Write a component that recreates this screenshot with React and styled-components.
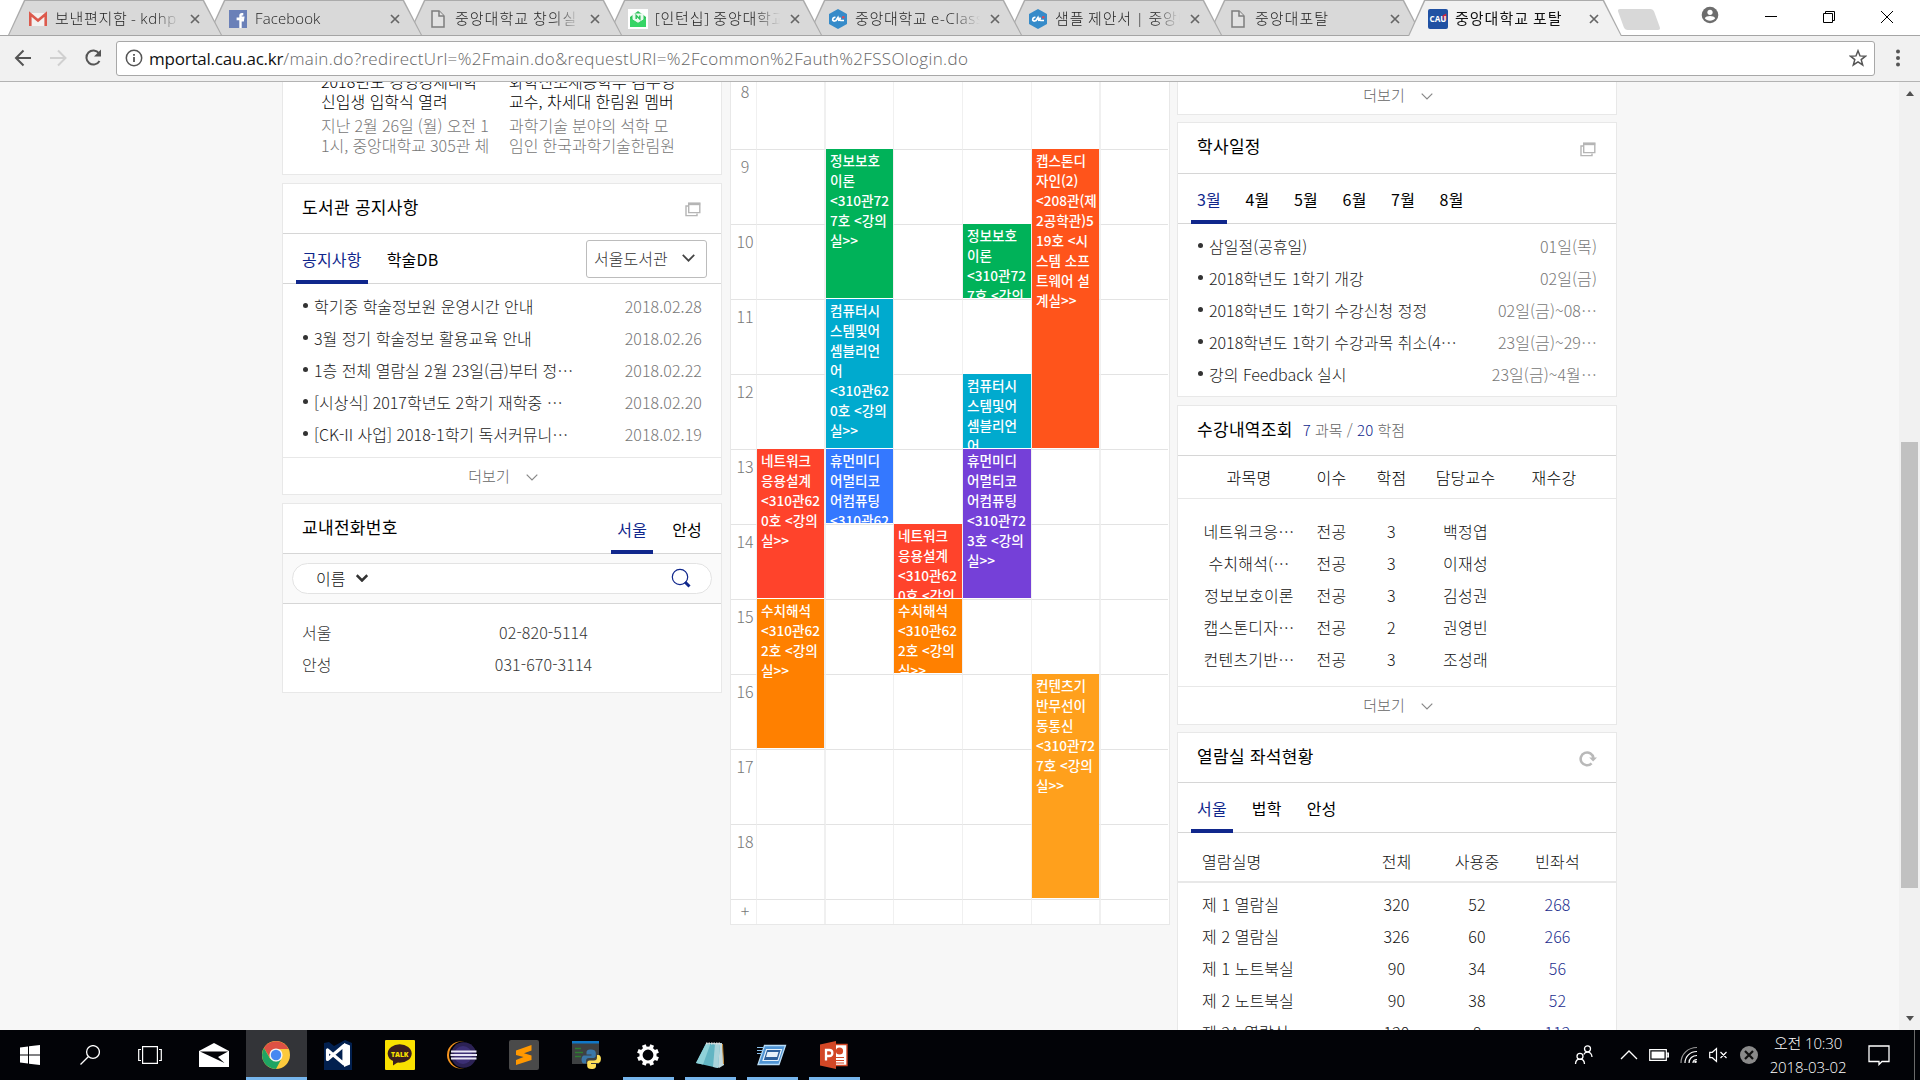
import React from "react";
import styled, { createGlobalStyle, css } from "styled-components";

const Global = createGlobalStyle`
  *, *::before, *::after { box-sizing: border-box; }
  html, body { margin: 0; padding: 0; overflow: hidden; }
  body { font-family: "Noto Sans CJK KR", "Noto Sans", sans-serif; font-weight: 300; color: #333; }
`;

const NAVY = "#10278c";
const UI_FONT = `"Open Sans", "Noto Sans CJK KR", sans-serif`;

const Screen = styled.div`
  width: 1920px;
  height: 1080px;
  display: flex;
  flex-direction: column;
  overflow: hidden;
  background: #f7f7f7;
`;

/* ---------- browser chrome ---------- */
const TabStrip = styled.div`
  height: 36px;
  flex: none;
  display: flex;
  padding-left: 8px;
  background: #fff;
  box-shadow: inset 0 -1px 0 #a5a5a5;
`;
const TabShape = styled.div`
  position: relative;
  z-index: ${(p) => p.$z};
  width: 214px;
  height: ${(p) => (p.$active ? 36 : 35)}px;
  margin-right: -14px;
  flex: none;
  display: flex;
  align-items: center;
  padding: 2px 0 0 20px;
  background: #ababab;
  clip-path: polygon(16px 0, calc(100% - 18px) 0, 100% 100%, 0 100%);
  &::before {
    content: "";
    position: absolute;
    z-index: -1;
    inset: 1px 1.2px 0 1.2px;
    background: ${(p) => (p.$active ? "#f1f1f1" : "#d9d9d9")};
    clip-path: polygon(16px 0, calc(100% - 18px) 0, 100% 100%, 0 100%);
  }
`;
const TabLabel = styled.span`
  width: 125px;
  margin: -2px 0 0 7px;
  overflow: hidden;
  white-space: nowrap;
  font: ${(p) => (p.$active ? 400 : 300)} 15px/24px ${UI_FONT};
  letter-spacing: ${(p) => p.$spacing || "1px"};
  word-spacing: -1px;
  color: ${(p) => (p.$active ? "#111" : "#222")};
  mask-image: linear-gradient(to right, #000 ${(p) => (p.$active ? 99 : 80)}%, transparent 100%);
`;
const TabClose = styled.svg`
  margin-left: ${(p) => (p.$active ? 9 : 10)}px;
  stroke: #666;
  stroke-width: 1.7;
`;
const NewTab = styled.div`
  flex: none;
  width: 36px;
  height: 21px;
  margin: 9px 0 0 13px;
  border-radius: 3px;
  background: #d8d8d8;
  transform: skewX(20deg);
`;
const WindowButtons = styled.div`
  flex: none;
  display: flex;
  margin-left: 44px;
  svg { margin-right: 38px; margin-top: 6px; }
  svg:first-child { margin-right: 42px; }
  svg:last-child { margin-right: 0; }
`;
const Toolbar = styled.div`
  height: 46px;
  flex: none;
  display: flex;
  align-items: center;
  padding: 0 15px 1px 14px;
  background: #f1f1f1;
  border-bottom: 1px solid #b3b3b3;
`;
const NavIcons = styled.div`
  width: 102px;
  display: flex;
  gap: 15px;
`;
const Omnibox = styled.div`
  width: 1759px;
  height: 35px;
  display: flex;
  align-items: center;
  padding: 0 7px 0 8px;
  border: 1px solid #a8a8a8;
  border-radius: 3px;
  background: #fff;
`;
const Url = styled.span`
  flex: 1;
  margin-left: 6px;
  padding-top: 1px;
  white-space: nowrap;
  font: 300 17px/24px ${UI_FONT};
  letter-spacing: 0.35px;
  color: #666;
  b { font-weight: 400; letter-spacing: -0.22px; color: #111; }
`;
const MenuDots = styled.svg`
  margin-left: 16px;
`;

/* ---------- page ---------- */
const Viewport = styled.div`
  height: 948px;
  flex: none;
  display: flex;
  overflow: hidden;
`;
const Columns = styled.div`
  width: 1899px;
  padding-left: 282px;
  display: grid;
  grid-template-columns: 440px 440px 440px;
  column-gap: 7.5px;
  align-items: start;
`;
const Column = styled.div`
  display: flex;
  flex-direction: column;
  gap: 8px;
`;
const Card = styled.section`
  height: ${(p) => (p.$h ? `${p.$h}px` : "auto")};
  margin-top: ${(p) => p.$shift || 0}px;
  border: 1px solid #e8e8e8;
  background: #fff;
  overflow: hidden;
`;
const CardHead = styled.header`
  height: ${(p) => p.$h || 50}px;
  display: flex;
  align-items: center;
  justify-content: space-between;
  padding: 0 ${(p) => p.$right ?? 20}px 0 19px;
  border-bottom: 1px solid #d6d6d6;
  > svg { margin-top: 2px; }
`;
const Title = styled.h2`
  margin: 0;
  padding-bottom: ${(p) => p.$lift ?? 4}px;
  font-size: 17px;
  line-height: 24px;
  font-weight: 400;
  letter-spacing: 0.3px;
  color: #000;
`;
const TitleNote = styled.small`
  margin-left: 10px;
  font-size: 15px;
  font-weight: 300;
  letter-spacing: 0.15px;
  word-spacing: -0.3px;
  color: #666;
  em { font-style: normal; color: ${NAVY}; }
`;
const Tabs = styled.nav`
  height: 50px;
  display: flex;
  gap: ${(p) => p.$gap || 13}px;
  padding-left: 13px;
  border-bottom: 1px solid #d6d6d6;
  ${(p) => p.$inHead && css`
    border: 0;
    height: 50px;
    margin: 1px -7px 0 0;
  `}
`;
const Tab = styled.a`
  height: 50px;
  padding: 2px 6px 0;
  line-height: 46px;
  font-size: 16px;
  font-weight: 400;
  letter-spacing: 0.2px;
  white-space: nowrap;
  color: ${(p) => (p.$on ? NAVY : "#000")};
  box-shadow: ${(p) => (p.$on ? `inset 0 -4px 0 ${NAVY}` : "none")};
`;
const Select = styled.div`
  width: 121px;
  height: 38px;
  margin: 6px 14px 0 auto;
  display: flex;
  align-items: center;
  justify-content: space-between;
  padding: 0 11px 2px 7px;
  border: 1px solid #bcbcbc;
  border-radius: 3px;
  font-size: 16px;
  color: #333;
`;
const List = styled.ul`
  margin: 0;
  padding: 6px 19px 0;
  height: ${(p) => p.$h}px;
  list-style: none;
`;
const Item = styled.li`
  height: 32px;
  display: flex;
  align-items: center;
  justify-content: space-between;
  font-size: 16px;
  white-space: nowrap;
  color: #222;
  time { color: #777; letter-spacing: 0.08px; }
  &::before {
    content: "";
    width: 5px;
    height: 5px;
    margin: -2px 6px 0 1px;
    border-radius: 50%;
    background: #333;
  }
  span { flex: 1; }
`;
const MoreBar = styled.div`
  height: 38px;
  display: flex;
  align-items: center;
  justify-content: center;
  gap: 16px;
  padding: 0 0 2px 2px;
  border-top: 1px solid #e8e8e8;
  font-size: 15px;
  color: #666;
  svg { margin-top: 3px; }
`;
const News = styled.div`
  display: grid;
  grid-template-columns: 188px 188px;
  margin-top: -2px;
  padding: 0 0 0 38px;
  font-size: 16px;
  line-height: 20px;
  white-space: nowrap;
  h3 { margin: 0 0 4px; font-size: 16px; font-weight: 300; line-height: 20px; color: #000; }
  p { margin: 0; color: #777; word-spacing: -0.4px; }
`;
const SearchBand = styled.div`
  height: 50px;
  padding: 9px 9px 0;
  background: #fafafa;
  border-bottom: 1px solid #d6d6d6;
`;
const SearchPill = styled.div`
  height: 31px;
  display: flex;
  align-items: center;
  padding: 0 20px 1px 23px;
  border: 1px solid #e3e3e3;
  border-radius: 16px;
  background: #fff;
  font-size: 16px;
  color: #111;
  svg:first-of-type { margin-left: 11px; }
  svg:last-of-type { margin-left: auto; }
`;
const PhoneRow = styled.div`
  height: 32px;
  display: grid;
  grid-template-columns: 120px 243px;
  align-items: center;
  padding-left: 19px;
  font-size: 16px;
  letter-spacing: 0.1px;
  color: #333;
  span:last-child { text-align: center; }
`;
const PhoneList = styled.div`
  padding-top: 12px;
`;

const CourseRow = styled.div`
  height: ${(p) => (p.$head ? 43 : 32)}px;
  display: grid;
  grid-template-columns: 102px 63px 57px 91px 86px;
  align-items: center;
  padding-left: 20px;
  text-align: center;
  font-size: 16px;
  letter-spacing: 0.2px;
  white-space: nowrap;
  color: #111;
  ${(p) => p.$head && css`
    border-bottom: 1px solid #e8e8e8;
    color: #000;
  `}
`;
const CourseBody = styled.div`
  height: 187px;
  padding-top: 16px;
`;
const SeatRow = styled.div`
  height: ${(p) => (p.$head ? 50 : 32)}px;
  display: grid;
  grid-template-columns: 154px 81px 80px 81px;
  align-items: center;
  padding-left: 24px;
  padding-top: ${(p) => (p.$head ? 8 : 0)}px;
  margin-bottom: ${(p) => (p.$head ? 5 : 0)}px;
  border-bottom: ${(p) => (p.$head ? "2px solid #e8e8e8" : "0")};
  text-align: center;
  font-size: 16px;
  letter-spacing: 0.1px;
  white-space: nowrap;
  color: #111;
  span:first-child { text-align: left; }
  span:last-child { color: ${(p) => (p.$head ? "#111" : "#1d2f8e")}; }
`;

/* ---------- timetable ---------- */
const TimeGrid = styled.div`
  display: grid;
  grid-template-columns: 26px 69px 68px 69px 69px 69px 67px;
  grid-template-rows: repeat(11, 75px) 25px;
`;
const Cell = styled.div`
  grid-column: ${(p) => p.$col};
  grid-row: ${(p) => p.$row};
  border-top: 1px solid #e3e3e3;
  border-right: ${(p) => (p.$col === 7 ? "0" : p.$col === 2 || p.$col === 6 ? "2px" : "1px")} solid #f0f0f0;
`;
const Hour = styled(Cell)`
  padding: ${(p) => (p.$small ? 0 : 4)}px 0 0 4px;
  font-size: 16px;
  line-height: ${(p) => (p.$small ? 20 : 24)}px;
  text-align: center;
  color: #777;
`;
const Lecture = styled.div`
  grid-column: ${(p) => p.$col};
  grid-row: ${(p) => p.$row} / span ${(p) => p.$span};
  z-index: 1;
  margin: 0 ${(p) => (p.$col === 2 || p.$col === 6 ? 2 : 1)}px 1px 0;
  padding: 1px 0 0 4.5px;
  overflow: hidden;
  background: ${(p) => p.$bg};
  color: #fff;
  font-size: 13.6px;
  font-weight: 500;
  line-height: 20px;
  white-space: pre;
`;

/* ---------- scrollbar ---------- */
const ScrollTrack = styled.div`
  width: 21px;
  display: flex;
  flex-direction: column;
  align-items: center;
  justify-content: space-between;
  padding: 9px 2px 8px;
  background: #f1f1f1;
`;
const Thumb = styled.div`
  width: 17px;
  height: 446px;
  margin-top: 216px;
  background: #c1c1c1;
`;

/* ---------- taskbar ---------- */
const Taskbar = styled.footer`
  height: 50px;
  flex: none;
  display: flex;
  background: #020307;
`;
const TaskButton = styled.div`
  width: ${(p) => p.$w || 62}px;
  height: 50px;
  display: flex;
  align-items: center;
  justify-content: center;
  padding-left: ${(p) => p.$inset || 0}px;
  background: ${(p) => (p.$active ? "linear-gradient(#333438,#333438) 1px 0/61px 100% no-repeat" : "none")};
  position: relative;
  &::after {
    content: "";
    position: absolute;
    bottom: 0;
    left: ${(p) => (p.$active ? 1 : 6)}px;
    width: ${(p) => (p.$active ? 61 : 51)}px;
    height: ${(p) => (p.$active || p.$open ? 3 : 0)}px;
    background: #76b5ec;
  }
`;
const Tray = styled.div`
  margin-left: auto;
  display: flex;
  align-items: center;
  gap: 11px;
  padding-right: 5px;
  svg { flex: none; }
  svg:first-child { margin-right: 15px; }
`;
const Clock = styled.div`
  width: 100px;
  margin: 0 -1px 0 -11px;
  text-align: center;
  color: #fff;
  font: 300 15px/24px ${UI_FONT};
  letter-spacing: -0.15px;
`;
const Peek = styled.div`
  width: 1px;
  height: 50px;
  margin-left: 13px;
  background: #6a6a6a;
`;

/* ---------- icons ---------- */
const Chevron = ({ w = 12, h = 7, c = "#888", s = 1.2 }) => (
  <svg width={w} height={h} viewBox="0 0 12 7" fill="none" stroke={c} strokeWidth={s}>
    <path d="M.7.7 6 6 11.3.7" />
  </svg>
);
const WindowIcon = () => (
  <svg width="16" height="15" viewBox="0 0 16 15" fill="none" stroke="#b5b5b5">
    <path d="M3.700 1.200h11.100v9.400H3.700z" strokeWidth="1.400" />
    <path d="M3.200 2h12" strokeWidth="2.400" />
    <path d="M3 4H1v9.600h11v-2" strokeWidth="1.400" />
  </svg>
);
const RefreshIcon = () => (
  <svg width="18" height="17" viewBox="0 0 18 17" fill="none">
    <path d="M12.600 13.400A6.400 6.400 0 1 1 14.400 8" stroke="#b9b9b9" strokeWidth="2.600" />
    <path d="M10.200 7.400H18l-3.900 4.200z" fill="#b9b9b9" />
  </svg>
);
const PageFav = () => (
  <svg width="20" height="20" viewBox="0 0 20 20" fill="#e2e2e2" stroke="#7d7d7d" strokeWidth="1.500">
    <path d="M4 2h7l5 5v11H4z" /><path d="M11 2v5h5" />
  </svg>
);
const GmailFav = () => (
  <svg width="20" height="20" viewBox="0 0 20 20">
    <path d="M2 4h16v13H2z" fill="#f3f1f0" />
    <path d="M2.300 17V5l7.700 6.600L17.700 5v12" fill="none" stroke="#dc5a4d" strokeWidth="2.600" />
  </svg>
);
const FbFav = () => (
  <svg width="20" height="20" viewBox="0 0 20 20">
    <rect x="1" y="1" width="18" height="18" fill="#6a80b8" />
    <path d="M15.300 5.200h-1.400c-1 0-1.400.5-1.400 1.400v2h2.700l-.4 2.700h-2.300V19" fill="none" stroke="#fff" strokeWidth="2.400" />
    <path d="M8.600 8.600h5v2.600h-5z" fill="#fff" />
  </svg>
);
const MailFav = () => (
  <svg width="20" height="20" viewBox="0 0 20 20">
    <rect width="20" height="20" fill="#fff" />
    <path d="M2 8l8-6 8 6v10H2z" fill="#2fc25b" />
    <path d="M4.500 4.500h11v6L10 14l-5.500-3.500z" fill="#eafbef" />
    <path d="M2 9l8 5 8-5v9H2z" fill="#36d566" />
    <path d="M8.200 10V6.500l3.600 3.500V6.500" fill="none" stroke="#2fc25b" strokeWidth="1.500" />
  </svg>
);
const HexFav = () => (
  <svg width="20" height="20" viewBox="0 0 20 20">
    <path d="M10 0l9 5v10l-9 5-9-5V5z" fill="#368bc9" />
    <path d="M7.500 8.500c-3-.8-4 4-1 3.500l1.500-.5 2-3 1 3.500M11.500 12l.8-3.500M12.500 11.500h3.500" fill="none" stroke="#fff" strokeWidth="1.700" />
    <circle cx="15.300" cy="8.300" r="1.300" fill="#d64b58" />
  </svg>
);
const CauFav = () => (
  <svg width="20" height="20" viewBox="0 0 20 20">
    <rect width="20" height="20" rx="2" fill="#2051a3" />
    <path d="M14.500 6.500l3.800-2v6l-2 1z" fill="#d0283b" />
    <text x="1.500" y="13.300" fontSize="8" fontWeight="700" fontFamily="Open Sans, sans-serif" fill="#fff" textLength="17" lengthAdjust="spacingAndGlyphs">CAU</text>
  </svg>
);

const browserTabs = [
  { label: "보낸편지함 - kdhp", Icon: GmailFav, spacing: "0.7px" },
  { label: "Facebook", Icon: FbFav, spacing: "0.1px" },
  { label: "중앙대학교 창의실", Icon: PageFav },
  { label: "[인턴십] 중앙대학교", Icon: MailFav, spacing: "0.75px" },
  { label: "중앙대학교 e-Class", Icon: HexFav, spacing: "0.7px" },
  { label: "샘플 제안서 | 중앙대", Icon: HexFav, spacing: "0.85px" },
  { label: "중앙대포탈", Icon: PageFav },
  { label: "중앙대학교 포탈", Icon: CauFav, active: true },
];

const notices = [
  ["학기중 학술정보원 운영시간 안내", "2018.02.28"],
  ["3월 정기 학술정보 활용교육 안내", "2018.02.26"],
  ["1층 전체 열람실 2월 23일(금)부터 정…", "2018.02.22"],
  ["[시상식] 2017학년도 2학기 재학중 …", "2018.02.20"],
  ["[CK-II 사업] 2018-1학기 독서커뮤니…", "2018.02.19"],
];
const schedule = [
  ["삼일절(공휴일)", "01일(목)"],
  ["2018학년도 1학기 개강", "02일(금)"],
  ["2018학년도 1학기 수강신청 정정", "02일(금)~08…"],
  ["2018학년도 1학기 수강과목 취소(4…", "23일(금)~29…"],
  ["강의 Feedback 실시", "23일(금)~4월…"],
];
const courses = [
  ["네트워크응…", "전공", "3", "백정엽", ""],
  ["수치해석(…", "전공", "3", "이재성", ""],
  ["정보보호이론", "전공", "3", "김성권", ""],
  ["캡스톤디자…", "전공", "2", "권영빈", ""],
  ["컨텐츠기반…", "전공", "3", "조성래", ""],
];
const seats = [
  ["제 1 열람실", 320, 52, 268],
  ["제 2 열람실", 326, 60, 266],
  ["제 1 노트북실", 90, 34, 56],
  ["제 2 노트북실", 90, 38, 52],
  ["제 2A 열람실", 120, 8, 112],
];
const hours = [8, 9, 10, 11, 12, 13, 14, 15, 16, 17, 18];
const lectures = [
  { col: 3, at: 9, span: 2, bg: "#00b259", text: "정보보호\n이론\n<310관72\n7호 <강의\n실>>" },
  { col: 5, at: 10, span: 1, bg: "#00b259", text: "정보보호\n이론\n<310관72\n7호 <강의" },
  { col: 6, at: 9, span: 4, bg: "#ff541b", text: "캡스톤디\n자인(2)\n<208관(제\n2공학관)5\n19호 <시\n스템 소프\n트웨어 설\n계실>>" },
  { col: 3, at: 11, span: 2, bg: "#00aace", text: "컴퓨터시\n스템및어\n셈블리언\n어\n<310관62\n0호 <강의\n실>>" },
  { col: 5, at: 12, span: 1, bg: "#00aace", text: "컴퓨터시\n스템및어\n셈블리언\n어" },
  { col: 2, at: 13, span: 2, bg: "#ff432b", text: "네트워크\n응용설계\n<310관62\n0호 <강의\n실>>" },
  { col: 3, at: 13, span: 1, bg: "#3478ff", text: "휴먼미디\n어멀티코\n어컴퓨팅\n<310관62" },
  { col: 5, at: 13, span: 2, bg: "#7540d8", text: "휴먼미디\n어멀티코\n어컴퓨팅\n<310관72\n3호 <강의\n실>>" },
  { col: 4, at: 14, span: 1, bg: "#ff432b", text: "네트워크\n응용설계\n<310관62\n0호 <강의" },
  { col: 2, at: 15, span: 2, bg: "#ff8000", text: "수치해석\n<310관62\n2호 <강의\n실>>" },
  { col: 4, at: 15, span: 1, bg: "#ff8000", text: "수치해석\n<310관62\n2호 <강의\n실>>" },
  { col: 6, at: 16, span: 3, bg: "#ffa01c", text: "컨텐츠기\n반무선이\n동통신\n<310관72\n7호 <강의\n실>>" },
];

function Browser() {
  return (
    <>
      <TabStrip>
        {browserTabs.map(({ label, Icon, active, spacing }, i) => (
          <TabShape key={label} $active={active} $z={active ? 20 : 10 - i}>
            <Icon />
            <TabLabel $active={active} $spacing={spacing}>{label}</TabLabel>
            <TabClose $active={active} width="10" height="10" viewBox="0 0 10 10"><path d="M1 1l8 8M9 1 1 9" /></TabClose>
          </TabShape>
        ))}
        <NewTab />
        <WindowButtons>
          <svg width="18" height="18" viewBox="0 0 18 18">
            <circle cx="9" cy="9" r="8.300" fill="#6d6d6d" />
            <circle cx="9" cy="6.300" r="2.600" fill="#fff" /><path d="M3.800 12.300c1.200-3 9.200-3 10.400 0-2 3.300-8.400 3.300-10.400 0z" fill="#fff" />
          </svg>
          <svg width="20" height="20" viewBox="0 0 20 20"><path d="M4 10.500h12" stroke="#000" /></svg>
          <svg width="20" height="20" viewBox="0 0 20 20" fill="none" stroke="#000"><path d="M4.500 7.500h9v9h-9zM6.500 7.500v-2h9v9h-2" /></svg>
          <svg width="20" height="20" viewBox="0 0 20 20" stroke="#000"><path d="M4 5l12 12M16 5 4 17" /></svg>
        </WindowButtons>
      </TabStrip>
      <Toolbar>
        <NavIcons>
          <svg width="20" height="20" viewBox="0 0 20 20" fill="none" stroke="#555" strokeWidth="2"><path d="M9.500 2.500 2 10l7.500 7.500M2 10h15" /></svg>
          <svg width="20" height="20" viewBox="0 0 20 20" fill="none" stroke="#d0d0d0" strokeWidth="2"><path d="M9 2.500 16.500 10 9 17.500M1 10h15" /></svg>
          <svg width="20" height="20" viewBox="0 0 20 20" fill="none" stroke="#555" strokeWidth="2"><path d="M15.500 13A7 7 0 1 1 15 5.300" /><path d="M17 1.500v7h-7z" fill="#555" stroke="none" /></svg>
        </NavIcons>
        <Omnibox>
          <svg width="18" height="18" viewBox="0 0 18 18" fill="none" stroke="#555" strokeWidth="1.500"><circle cx="9" cy="9" r="7.700" /><path d="M9 8v5M9 5v1.700" strokeWidth="1.800" /></svg>
          <Url><b>mportal.cau.ac.kr</b>/main.do?redirectUrl=%2Fmain.do&amp;requestURI=%2Fcommon%2Fauth%2FSSOlogin.do</Url>
          <svg width="18" height="18" viewBox="0 0 18 18" fill="none" stroke="#555" strokeWidth="1.500"><path d="M9 1.800l2 5.100 5.500.3-4.300 3.400 1.500 5.400L9 12.900 4.300 16l1.500-5.400L1.500 7.200 7 6.900z" /></svg>
        </Omnibox>
        <MenuDots width="14" height="20" viewBox="0 0 14 20" fill="#555"><circle cx="7" cy="3.500" r="2" /><circle cx="7" cy="10" r="2" /><circle cx="7" cy="16.500" r="2" /></MenuDots>
      </Toolbar>
    </>
  );
}

const More = () => <MoreBar>더보기<Chevron /></MoreBar>;

function LeftColumn() {
  return (
    <Column>
      <Card $h={103} $shift={-10}>
        <News>
          <div><h3>2018년도 경영경제대학<br />신입생 입학식 열려</h3><p>지난 2월 26일 (월) 오전 1<br />1시, 중앙대학교 305관 체</p></div>
          <div><h3>화학신소재공학부 김수영<br />교수, 차세대 한림원 멤버</h3><p>과학기술 분야의 석학 모<br />임인 한국과학기술한림원</p></div>
        </News>
      </Card>
      <Card $h={312}>
        <CardHead><Title>도서관 공지사항</Title><WindowIcon /></CardHead>
        <Tabs>
          <Tab $on>공지사항</Tab><Tab>학술DB</Tab>
          <Select>서울도서관<Chevron w={13} h={8} c="#444" s={1.6} /></Select>
        </Tabs>
        <List $h={173}>
          {notices.map(([t, d]) => <Item key={d}><span>{t}</span><time>{d}</time></Item>)}
        </List>
        <More />
      </Card>
      <Card $h={190}>
        <CardHead><Title>교내전화번호</Title><Tabs $inHead><Tab $on>서울</Tab><Tab>안성</Tab></Tabs></CardHead>
        <SearchBand>
          <SearchPill>
            이름<Chevron w={12} h={8} c="#333" s={2.6} />
            <svg width="20" height="20" viewBox="0 0 20 20" fill="none" stroke={NAVY}><circle cx="9" cy="9" r="7.700" strokeWidth="1.200" /><path d="M14 14l4.500 4.500" strokeWidth="3" /></svg>
          </SearchPill>
        </SearchBand>
        <PhoneList>
          <PhoneRow><span>서울</span><span>02-820-5114</span></PhoneRow>
          <PhoneRow><span>안성</span><span>031-670-3114</span></PhoneRow>
        </PhoneList>
      </Card>
    </Column>
  );
}

function Timetable() {
  return (
    <Card $h={852} $shift={-9}>
      <TimeGrid>
        {[...hours, "+"].map((h, r) => (
          <React.Fragment key={h}>
            <Hour $col={1} $row={r + 1} $small={h === "+"}>{h}</Hour>
            {[2, 3, 4, 5, 6, 7].map((c) => <Cell key={c} $col={c} $row={r + 1} />)}
          </React.Fragment>
        ))}
        {lectures.map((l) => (
          <Lecture key={`${l.col}-${l.at}`} $col={l.col} $row={l.at - 7} $span={l.span} $bg={l.bg}>{l.text}</Lecture>
        ))}
      </TimeGrid>
    </Card>
  );
}

function RightColumn() {
  return (
    <Column>
      <Card $h={40} $shift={-7}><More /></Card>
      <Card $h={275} $shift={-1}>
        <CardHead $h={51}><Title>학사일정</Title><WindowIcon /></CardHead>
        <Tabs $gap={12.5}>{["3월", "4월", "5월", "6월", "7월", "8월"].map((m, i) => <Tab key={m} $on={i === 0}>{m}</Tab>)}</Tabs>
        <List $h={172}>
          {schedule.map(([t, d]) => <Item key={t}><span>{t}</span><time>{d}</time></Item>)}
        </List>
      </Card>
      <Card $h={320}>
        <CardHead><Title $lift={2}>수강내역조회<TitleNote><em>7</em> 과목 / <em>20</em> 학점</TitleNote></Title></CardHead>
        <CourseRow $head>{["과목명", "이수", "학점", "담당교수", "재수강"].map((t) => <span key={t}>{t}</span>)}</CourseRow>
        <CourseBody>
          {courses.map((r) => <CourseRow key={r[0]}>{r.map((t, i) => <span key={i}>{t}</span>)}</CourseRow>)}
        </CourseBody>
        <More />
      </Card>
      <Card $h={400} $shift={-1}>
        <CardHead $right={19}><Title $lift={3}>열람실 좌석현황</Title><RefreshIcon /></CardHead>
        <Tabs><Tab $on>서울</Tab><Tab>법학</Tab><Tab>안성</Tab></Tabs>
        <SeatRow $head>{["열람실명", "전체", "사용중", "빈좌석"].map((t) => <span key={t}>{t}</span>)}</SeatRow>
        {seats.map((r) => <SeatRow key={r[0]}>{r.map((t, i) => <span key={i}>{t}</span>)}</SeatRow>)}
      </Card>
    </Column>
  );
}

function TaskIcons() {
  return (
    <>
      <TaskButton $w={60}>
        <svg width="20" height="20" viewBox="0 0 20 20" fill="#fff"><path d="M0 2.600l8-1.100v8H0zM9 1.300 20 0v9.500H9zM0 10.500h8v8l-8-1.100zM9 10.500h11V20L9 18.700z" /></svg>
      </TaskButton>
      <TaskButton $w={60}>
        <svg width="20" height="20" viewBox="0 0 20 20" fill="none" stroke="#fff" strokeWidth="1.300"><circle cx="13" cy="7" r="6.400" /><path d="M8.500 11.500.5 19.500" /></svg>
      </TaskButton>
      <TaskButton $w={60}>
        <svg width="24" height="20" viewBox="0 0 24 20" fill="none" stroke="#fff" strokeWidth="1.200"><path d="M4.600 1.600h14.800v16.800H4.600zM3 4.500H.7v11H3M21 4.500h2.300v11H21" /></svg>
      </TaskButton>
      <TaskButton $w={65} $inset={3}>
        <svg width="30" height="26" viewBox="0 0 30 26"><path d="M0 9 15 1l15 8v16H0z" fill="#fff" /><path d="M1 9.500h28L19 15l6.500 6z" fill="#020307" /></svg>
      </TaskButton>
      <TaskButton $active>
        <svg width="28" height="28" viewBox="0 0 28 28">
          <circle cx="14" cy="14" r="14" fill="#fcc93c" />
          <path d="M1.900 7A14 14 0 0 1 26.500 8H14l-6.500 8z" fill="#dd5144" />
          <path d="M1.900 7 8 17.500 14 20.500l5-2L14 28A14 14 0 0 1 1.900 7z" fill="#1fa463" />
          <circle cx="14" cy="14" r="6.600" fill="#f4f4f4" /><circle cx="14" cy="14" r="5.200" fill="#4688f1" />
        </svg>
      </TaskButton>
      <TaskButton>
        <svg width="28" height="30" viewBox="0 0 28 30"><path d="M0 3 5 2l5 4L21 0l7 3v27H0z" fill="#02204f" /><path d="M3.500 10v9.500L20 5.500v18.500z" fill="none" stroke="#fff" strokeWidth="3.200" strokeLinejoin="round" /><path d="M20 3l6 2.500v19L20 27z" fill="#fff" /></svg>
      </TaskButton>
      <TaskButton>
        <svg width="30" height="30" viewBox="0 0 30 30"><rect width="30" height="30" rx="1" fill="#fae100" /><ellipse cx="14.700" cy="13.500" rx="12" ry="9.300" fill="#3b1e1e" /><path d="M8 20v5.500l6-4z" fill="#3b1e1e" /><text x="6" y="16.500" fontSize="7.500" fontWeight="800" fontFamily="Open Sans, sans-serif" fill="#fae100" textLength="17.500" lengthAdjust="spacingAndGlyphs">TALK</text></svg>
      </TaskButton>
      <TaskButton>
        <svg width="30" height="28" viewBox="0 0 30 28"><circle cx="13.500" cy="14" r="13.500" fill="#f7941e" /><circle cx="15.500" cy="14" r="13.500" fill="#020307" /><circle cx="16.700" cy="14" r="12.700" fill="#2c2255" /><circle cx="16" cy="14" r="9" fill="#3c2f75" /><path d="M4 10.500h25.500M3.500 14H30M4 17.500h25.500" stroke="#e8e6f5" strokeWidth="1.900" /></svg>
      </TaskButton>
      <TaskButton>
        <svg width="30" height="30" viewBox="0 0 30 30"><rect width="30" height="30" rx="2" fill="#4a4a4a" /><path d="M7 10.500 22.500 5v5.500L15 13.200l7.500 2.300v4.500L7 25v-5l7.500-3L7 15z" fill="#ff9800" /></svg>
      </TaskButton>
      <TaskButton>
        <svg width="30" height="30" viewBox="0 0 30 30"><path d="M1 1h27v23H1z" fill="#3e4142" /><path d="M1 1h27v2.500H1z" fill="#0f78c8" /><path d="M4 8.500h6M4 12.500h8M4 16.500h6" stroke="#2f7d32" strokeWidth="1.300" /><path d="M20 9.500c-4 0-4.500 1.500-4.500 3.500v1.500h5v1H13c-3 0-3.500 8 0 8h2V21c0-2 1-3 3-3h4.500c1.500 0 2.300-1 2.300-2.500V13c0-2.500-2-3.500-4.800-3.500z" fill="#3b77a8" /><path d="M20.500 29c4 0 4.500-1.500 4.500-3.500V24h-5v-1h7.500c3 0 3.500-8 0-8H26v2.500c0 2-1 3-3 3h-4.500c-1.500 0-2.300 1-2.300 2.500V26c0 2 1.500 3 4.300 3z" fill="#ffdf57" /></svg>
      </TaskButton>
      <TaskButton $open>
        <svg width="24" height="24" viewBox="0 0 24 24" fill="none" stroke="#fff"><circle cx="12" cy="12" r="7" strokeWidth="3.200" /><g strokeWidth="4"><path d="M14.900 5 16.200 1.900M9.100 19l-1.300 3.100M9.100 5 7.800 1.900M14.900 19l1.300 3.100M5 9.100 1.900 7.800M19 14.900l3.100 1.300M5 14.900l-3.100 1.300M19 9.100l3.100-1.300" /></g></svg>
      </TaskButton>
      <TaskButton $open>
        <svg width="28" height="28" viewBox="0 0 28 28"><path d="M10 2h16l2 22-5 3L14 20z" fill="#c3d9dd" /><path d="M10 2.500 24 3l-2 24L0 22z" fill="#62b5c3" /><path d="M10 2.500 0 22l7 1.500L14 4z" fill="#8fd2d9" /><path d="M19 3l5 0-2 24-5-1z" fill="#a9d3da" /><path d="M10 2.500 25 2.500" stroke="#ddd" strokeWidth="2" strokeDasharray="1.500 1" /><path d="M26.500 3l1 20" stroke="#c58a35" /></svg>
      </TaskButton>
      <TaskButton $open>
        <svg width="30" height="22" viewBox="0 0 30 22"><path d="M7.500 1.500h21L22 20.500H1z" fill="#4f94d4" stroke="#b9dcf5" strokeWidth="1.300" /><path d="M9.500 5.500h15L21 16.500H6z" fill="#2c5f9b" stroke="#e6f3fc" strokeWidth="1.200" /><path d="M10.500 8h11l-1.500 5h-11z" fill="#e6f1fa" /><path d="M0 3.500h7M0 6.500h6M0 9.500h5" stroke="#8ac0ea" /></svg>
      </TaskButton>
      <TaskButton $open>
        <svg width="28" height="28" viewBox="0 0 28 28"><path d="M14 3.500h13v21H14z" fill="#fff" stroke="#d24726" strokeWidth="1.400" /><circle cx="19.500" cy="10" r="3.600" fill="#d24726" /><path d="M16 16.500h8M16 19.500h8M16 22h8" stroke="#d24726" strokeWidth="1.200" /><path d="M0 3.500 16 0v28L0 24.500z" fill="#d24726" /><path d="M6 19.500V9h3.200c4.200 0 4.200 6 0 6H6" fill="none" stroke="#fff" strokeWidth="2.300" /></svg>
      </TaskButton>
    </>
  );
}

function TrayIcons() {
  return (
    <Tray>
      <svg width="20" height="20" viewBox="0 0 20 20" fill="none" stroke="#fff" strokeWidth="1.300"><circle cx="13.500" cy="3.800" r="3" /><path d="M9.800 9.500c1.500-3.500 7.500-3.500 8.200 2.500M1.500 19c.3-6.500 8.700-6.500 9 0" /><circle cx="6" cy="11.300" r="3" /></svg>
      <svg width="18" height="10" viewBox="0 0 18 10" fill="none" stroke="#fff" strokeWidth="1.300"><path d="M1 9l8-8 8 8" /></svg>
      <svg width="20" height="14" viewBox="0 0 20 14"><path d="M.7 1.700h16.600v10.600H.7zM18 5v4h1.500V5z" fill="none" stroke="#fff" strokeWidth="1.200" /><path d="M2.500 3.500h13v7h-13z" fill="#fff" /></svg>
      <svg width="18" height="18" viewBox="0 0 18 18" fill="none" stroke="#fff" strokeWidth="1.200"><path d="M1 17C1 8 8 1.500 17 1.500" stroke="#999" /><path d="M5 17C5 10.500 10 5.500 17 5.500M9 17c0-4.500 3.500-7.500 8-7.500M13 17c0-2 1.500-3.500 4-3.500" /><circle cx="15.500" cy="15.800" r="1.300" fill="#fff" stroke="none" /></svg>
      <svg width="20" height="16" viewBox="0 0 20 16" fill="none" stroke="#fff" strokeWidth="1.200"><path d="M.7 5.300h2.600L7.500 1.500v13L3.300 10.700H.7zM11.500 5l6 6M17.500 5l-6 6" /></svg>
      <svg width="18" height="18" viewBox="0 0 18 18"><circle cx="9" cy="9" r="9" fill="#8a8a8a" /><path d="M5 5l8 8M13 5l-8 8" stroke="#111" strokeWidth="2.200" /></svg>
      <Clock>오전 10:30<br />2018-03-02</Clock>
      <svg width="22" height="22" viewBox="0 0 22 22" fill="none" stroke="#fff" strokeWidth="1.300"><path d="M1 2h20v15.500h-7l-3 3v-3H1z" /></svg>
      <Peek />
    </Tray>
  );
}

export default function App() {
  return (
    <Screen lang="ko">
      <Global />
      <Browser />
      <Viewport>
        <Columns>
          <LeftColumn />
          <Timetable />
          <RightColumn />
        </Columns>
        <ScrollTrack>
          <svg width="8" height="6" viewBox="0 0 8 6" fill="#505050"><path d="M0 5h8L4 0z" /></svg>
          <Thumb />
          <svg width="8" height="6" viewBox="0 0 8 6" fill="#505050"><path d="M0 0h8L4 5z" /></svg>
        </ScrollTrack>
      </Viewport>
      <Taskbar>
        <TaskIcons />
        <TrayIcons />
      </Taskbar>
    </Screen>
  );
}
